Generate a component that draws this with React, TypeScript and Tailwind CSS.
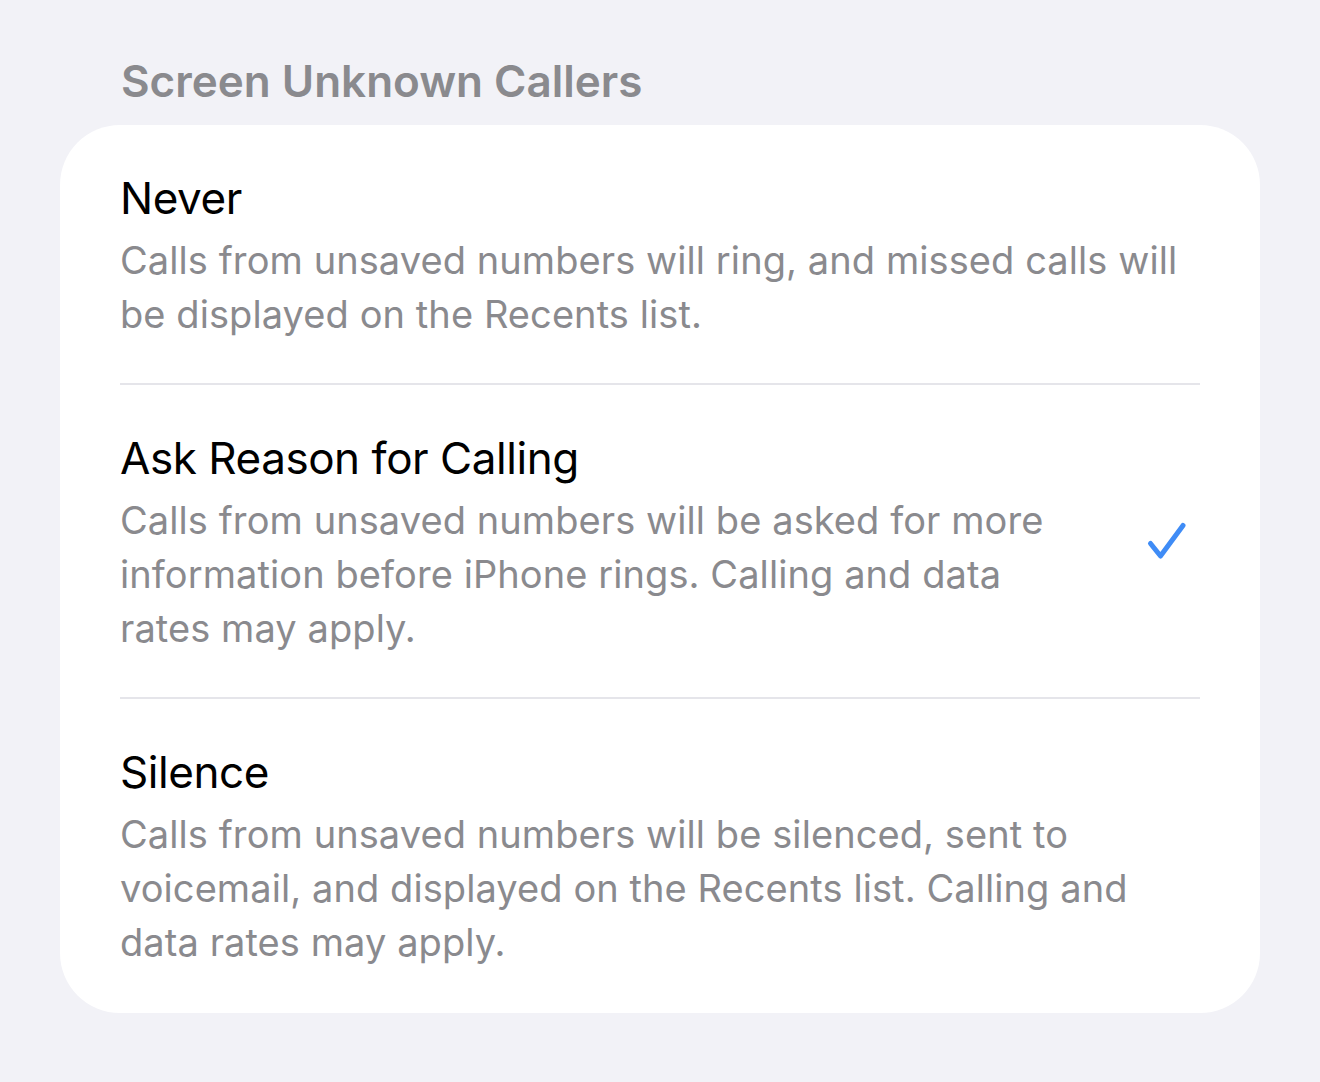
import React from 'react'

const options = [
  {
    title: 'Never',
    lines: ['Calls from unsaved numbers will ring, and missed calls will', 'be displayed on the Recents list.'],
    checked: false,
  },
  {
    title: 'Ask Reason for Calling',
    lines: [
      'Calls from unsaved numbers will be asked for more',
      'information before iPhone rings. Calling and data',
      'rates may apply.',
    ],
    checked: true,
  },
  {
    title: 'Silence',
    lines: [
      'Calls from unsaved numbers will be silenced, sent to',
      'voicemail, and displayed on the Recents list. Calling and',
      'data rates may apply.',
    ],
    checked: false,
  },
]

function Check() {
  return (
    <svg width="44" height="44" viewBox="0 0 44 44" fill="none" className="shrink-0">
      <path
        d="M4.5 22.5 L14.5 35 L37 4.5"
        stroke="#3f8cf6"
        strokeWidth="5"
        strokeLinecap="round"
        strokeLinejoin="round"
      />
    </svg>
  )
}

export default function App() {
  return (
    <div className="min-h-[1082px] w-full bg-[#f2f2f7] font-['Inter',sans-serif] pt-[51px]">
      {/* Section header */}
      <h2 className="pl-[121px] text-[44px] leading-[60px] font-semibold text-[#8a8a8e]">
        Screen Unknown Callers
      </h2>

      {/* Options card */}
      <div className="mx-[60px] mt-[14px] w-[1200px] rounded-[60px] bg-white px-[60px]">
        {options.map((opt, i) => {
          const last = i === options.length - 1
          return (
            <div
              key={opt.title}
              className={`flex items-center justify-between pt-[46px] ${
                last ? 'pb-[44px]' : 'pb-[42px] border-b-2 border-[#e5e5ea]'
              }`}
            >
              <div>
                <div className="text-[44px] leading-[54px] text-black tracking-[-0.45px]">{opt.title}</div>
                <p className="mt-[8px] text-[38px] leading-[54px] text-[#8a8a8e] tracking-[0.08px]">
                  {opt.lines.map((l, j) => (
                    <React.Fragment key={j}>
                      {l}
                      {j < opt.lines.length - 1 && <br />}
                    </React.Fragment>
                  ))}
                </p>
              </div>
              {opt.checked && (
                <div className="mr-[10px]">
                  <Check />
                </div>
              )}
            </div>
          )
        })}
      </div>
    </div>
  )
}
